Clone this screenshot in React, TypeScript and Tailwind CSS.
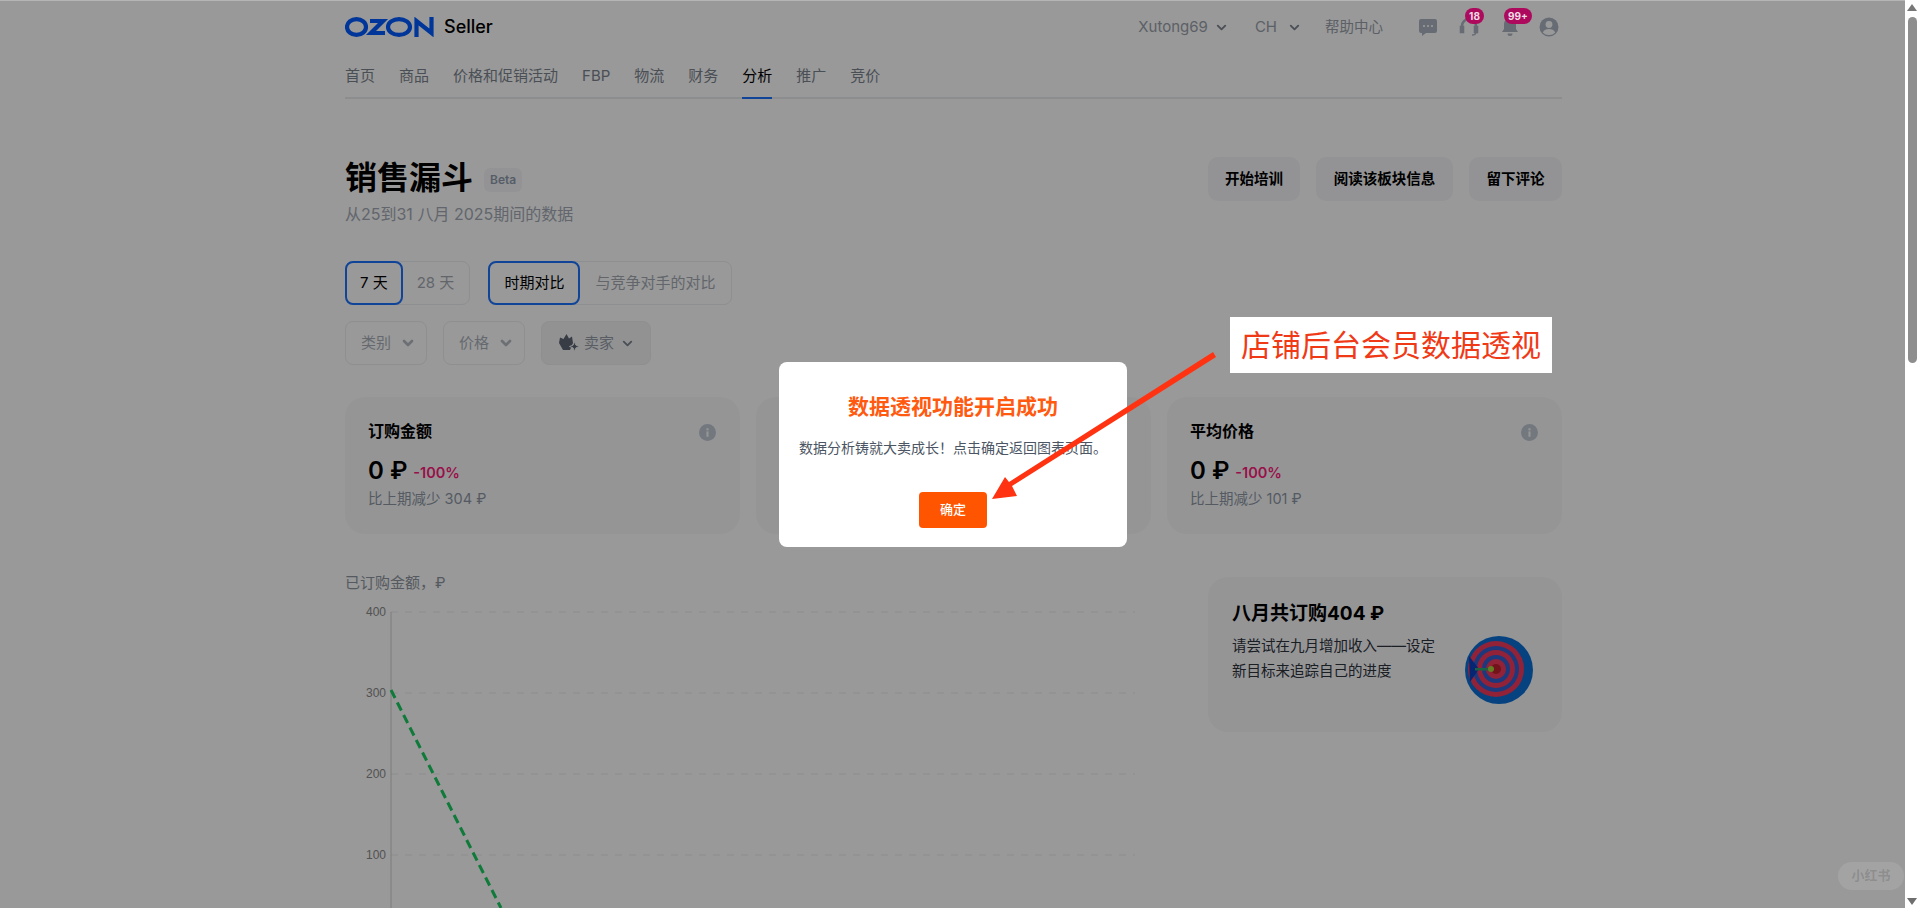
import React from 'react';
import { ChevronDown } from 'lucide-react';

const navItems = ['首页', '商品', '价格和促销活动', 'FBP', '物流', '财务', '分析', '推广', '竞价'];

const font = "font-['Inter','Noto_Sans_CJK_SC','Noto_Sans',sans-serif]";

function OzonLogo() {
  return (
    <div className="flex items-end">
      <svg viewBox="0 0 90 20" className="mb-[1px] h-[20px] w-[90px] fill-none stroke-[#005bff] stroke-[4.2]">
        <ellipse cx="11.5" cy="10" rx="9.5" ry="7.9" />
        <path d="M25 4h13L26 16h14" />
        <ellipse cx="54" cy="10" rx="11" ry="7.9" />
        <path d="M71.5 20V4l15 12V0" />
      </svg>
      <span className="ml-[9px] text-[18px] leading-[22px] font-medium text-black">Seller</span>
    </div>
  );
}

function Badge({ text, className }: { text: string; className: string }) {
  return (
    <span className={`absolute z-10 flex h-[16px] items-center justify-center rounded-full bg-[#ad0a5e] text-[10px] font-bold text-[#eedbe5] ${className}`}>
      {text}
    </span>
  );
}

function Header() {
  return (
    <div className="flex h-[54px] items-center justify-between">
      <OzonLogo />
      <div className="mr-[3px] flex items-center text-[15px] text-[#9aa1ab]">
        <span>Xutong69</span>
        <ChevronDown size={15} strokeWidth={3} className="ml-[6px] text-[#7d8591]" />
        <span className="ml-[26px]">CH</span>
        <ChevronDown size={15} strokeWidth={3} className="ml-[10px] text-[#7d8591]" />
        <span className="ml-[23px] text-[14.5px]">帮助中心</span>
        <svg viewBox="0 0 20 20" className="ml-[35px] h-[20px] w-[20px] fill-[#acb5c2]">
          <path d="M3 2h14a2 2 0 0 1 2 2v10a2 2 0 0 1-2 2H8l-4 3v-3H3a2 2 0 0 1-2-2V4a2 2 0 0 1 2-2Z" />
          <circle cx="6" cy="9" r="1.1" fill="#fff" />
          <circle cx="10" cy="9" r="1.1" fill="#fff" />
          <circle cx="14" cy="9" r="1.1" fill="#fff" />
        </svg>
        <div className="relative ml-[21px] h-[20px] w-[20px]">
          <svg viewBox="0 0 20 20" className="h-[20px] w-[20px] fill-none stroke-[#acb5c2] stroke-[2.6]">
            <path d="M3 11V9a7 7 0 0 1 14 0v2" />
            <path d="M2 10h2v5H2zM16 10h2v5h-2z" fill="#acb5c2" />
            <path d="M17 15c0 2-2 3-4 3" strokeWidth="1.4" />
          </svg>
          <Badge text="18" className="top-[-9px] left-[6px] w-[19px]" />
        </div>
        <div className="relative ml-[21px] h-[20px] w-[20px]">
          <svg viewBox="0 0 20 20" className="h-[20px] w-[20px] fill-[#acb5c2]">
            <path d="M10 1a6 6 0 0 0-6 6v5l-2 3h16l-2-3V7a6 6 0 0 0-6-6Z" />
            <path d="M7.5 16.5h5a2.5 2.5 0 0 1-5 0Z" />
          </svg>
          <Badge text="99+" className="top-[-9px] left-[4px] w-[28px]" />
        </div>
        <svg viewBox="0 0 20 20" className="ml-[19px] h-[20px] w-[20px]">
          <circle cx="10" cy="10" r="9.5" fill="#acb5c2" />
          <circle cx="10" cy="7.5" r="3.4" fill="#fff" />
          <path d="M3.8 15.5c1.2-2.6 3.6-3.5 6.2-3.5s5 .9 6.2 3.5A8 8 0 0 1 10 18a8 8 0 0 1-6.2-2.5Z" fill="#fff" />
        </svg>
      </div>
    </div>
  );
}

function Nav() {
  return (
    <div className="mt-[1px] flex h-[44px] gap-[24px] border-b-2 border-[#e9ebee] text-[15px]">
      {navItems.map((item) => (
        <div
          key={item}
          className={`-mb-[2px] flex h-[44px] items-center border-b-2 ${item === '分析' ? 'border-[#1b72ff] text-black' : 'border-transparent text-[#7c8490]'}`}
        >
          {item}
        </div>
      ))}
    </div>
  );
}

function Segment({ items, activeClass, restClass }: { items: string[]; activeClass: string; restClass: string }) {
  return (
    <div className="flex h-[44px] rounded-[8px] border border-[#eceef1]">
      {items.map((item, i) => (
        <div
          key={item}
          className={
            i === 0
              ? `-m-[1px] flex h-[44px] items-center rounded-[8px] border-2 border-[#1b72ff] text-black ${activeClass}`
              : `flex items-center text-[#a4aab3] ${restClass}`
          }
        >
          {item}
        </div>
      ))}
    </div>
  );
}

function Filter({ label }: { label: string }) {
  return (
    <div className="flex h-[44px] w-[82px] items-center rounded-[8px] border border-[#eceef1] pl-[15px] text-[#a9b0ba]">
      {label}
      <ChevronDown size={16} strokeWidth={4} className="ml-[9px] text-[#b4bbc4]" />
    </div>
  );
}

function InfoDot() {
  return (
    <svg viewBox="0 0 16 16" className="absolute top-[27px] right-[24px] h-[17px] w-[17px]">
      <circle cx="8" cy="8" r="8" fill="#c0c8d4" />
      <rect x="7" y="7" width="2" height="5" fill="#f8f9fb" />
      <rect x="7" y="4" width="2" height="2" fill="#f8f9fb" />
    </svg>
  );
}

function MetricCard({ title, sub }: { title: string; sub?: string }) {
  return (
    <div className="relative h-[137px] rounded-[20px] bg-[#f8f9fb] px-[23px] pt-[23px]">
      <div className="text-[16px] leading-[22px] font-bold text-black">{title}</div>
      <InfoDot />
      <div className="mt-[15px] flex items-center">
        <span className="text-[24px] leading-[28px] font-semibold text-black">0 ₽</span>
        <span className="mt-[3px] ml-[6px] text-[14.5px] font-semibold text-[#ff1a7a]">-100%</span>
      </div>
      <div className="mt-[4px] text-[14.5px] leading-[20px] text-[#8e97a3]">{sub}</div>
    </div>
  );
}

function Target() {
  return (
    <svg viewBox="0 0 68 68" className="h-[68px] w-[68px]">
      <circle cx="34" cy="34" r="34" fill="#0b6fd6" />
      <circle cx="31" cy="33" r="28" fill="#f33a5e" />
      <circle cx="31" cy="33" r="23" fill="#2f5fd0" />
      <circle cx="31" cy="33" r="19" fill="#f33a5e" />
      <circle cx="31" cy="33" r="14" fill="#2f5fd0" />
      <circle cx="31" cy="33" r="10" fill="#f33a5e" />
      <circle cx="31" cy="33" r="5" fill="#c0202c" />
      <path d="M4 20l10 13L5 46Z" fill="#0b3fc0" />
      <rect x="10" y="32" width="18" height="2.5" fill="#2fa36b" />
      <circle cx="26" cy="33" r="3" fill="#a8d23a" />
    </svg>
  );
}

function Chart() {
  const rows = [
    { label: '400', y: 12 },
    { label: '300', y: 93 },
    { label: '200', y: 174 },
    { label: '100', y: 255 },
  ];
  return (
    <svg viewBox="0 0 800 308" className="mt-[7px] h-[308px] w-[800px]">
      {rows.map((r) => (
        <g key={r.label}>
          <text x="41" y={r.y + 4} textAnchor="end" fontSize="12" fill="#8a8a8a" fontFamily="Liberation Sans, sans-serif">
            {r.label}
          </text>
          <line x1="46" x2="790" y1={r.y} y2={r.y} stroke="#ececec" strokeWidth="1" strokeDasharray="7 7" />
        </g>
      ))}
      <line x1="46" x2="46" y1="12" y2="308" stroke="#d0d0d0" strokeWidth="1" />
      <line x1="46" y1="90" x2="156" y2="308" stroke="#19cc60" strokeWidth="3" strokeDasharray="9 5" />
    </svg>
  );
}

function Annotation() {
  return (
    <>
      <div className="absolute top-[317px] left-[1230px] flex h-[56px] w-[322px] items-center justify-center bg-white text-[30px] text-[#f03a17]">
        店铺后台会员数据透视
      </div>
      <svg className="absolute top-0 left-0 h-[908px] w-[1919px]" viewBox="0 0 1919 908">
        <polygon points="1213,352 1216,357 1012,486 1017,496 992,499 1005,477 1009,482" fill="#ff3311" />
      </svg>
    </>
  );
}

function Modal() {
  return (
    <div className="absolute top-[362px] left-[779px] flex h-[185px] w-[348px] flex-col items-center rounded-[8px] bg-white">
      <div className="mt-[31px] text-[21px] leading-[28px] font-bold text-[#ff5a10]">数据透视功能开启成功</div>
      <div className="mt-[17px] text-[14px] leading-[20px] text-[#4b5563]">数据分析铸就大卖成长！点击确定返回图表页面。</div>
      <button className="mt-[34px] h-[36px] w-[68px] rounded-[4px] bg-[#ff5500] text-[13px] font-medium text-white">确定</button>
    </div>
  );
}

function Scrollbar() {
  return (
    <div className="flex w-[14px] shrink-0 flex-col items-center justify-between bg-white">
      <div className="flex w-full flex-col items-center">
        <div className="mt-[4px] h-0 w-0 border-x-[5px] border-b-[7px] border-x-transparent border-b-[#777777]" />
        <div className="mt-[6px] h-[346px] w-[9px] rounded-[5px] bg-[#8e8e8e]" />
      </div>
      <div className="mb-[3px] h-0 w-0 border-x-[5px] border-t-[7px] border-x-transparent border-t-[#6e6e6e]" />
    </div>
  );
}

export default function App() {
  return (
    <div className={`relative flex h-[908px] w-[1919px] overflow-hidden bg-white ${font}`}>
      <div className="relative min-w-0 flex-1 overflow-hidden">
        <div className="mx-[345px] w-[1217px]">
          <Header />
          <Nav />

          <div className="mt-[57px] flex items-start justify-between">
            <div>
              <div className="flex items-center">
                <h1 className="text-[32px] leading-[44px] font-bold text-black">销售漏斗</h1>
                <span className="mt-[3px] ml-[11px] flex h-[24px] items-center rounded-[6px] bg-[#f5f6f8] px-[6px] text-[12px] font-semibold text-[#8f9cad]">Beta</span>
              </div>
              <div className="mt-[3px] text-[16px] leading-[22px] text-[#a3aab5]">从25到31 八月 2025期间的数据</div>
            </div>
            <div className="mt-[1px] flex gap-[16px] text-[14.5px] font-bold text-black">
              <button className="h-[44px] w-[92px] rounded-[10px] bg-[#f5f6f8]">开始培训</button>
              <button className="h-[44px] w-[137px] rounded-[10px] bg-[#f5f6f8]">阅读该板块信息</button>
              <button className="h-[44px] w-[93px] rounded-[10px] bg-[#f5f6f8]">留下评论</button>
            </div>
          </div>

          <div className="mt-[36px] flex gap-[18px] text-[15px]">
            <Segment items={['7 天', '28 天']} activeClass="px-[13px]" restClass="px-[15px]" />
            <Segment items={['时期对比', '与竞争对手的对比']} activeClass="px-[14px]" restClass="px-[16px]" />
          </div>

          <div className="mt-[16px] flex gap-[16px] text-[15px]">
            <Filter label="类别" />
            <Filter label="价格" />
            <div className="flex h-[44px] w-[110px] items-center rounded-[8px] border border-[#eceef1] bg-[#f3f4f6] pl-[16px] text-[#959ca7]">
              <svg viewBox="0 0 22 20" className="h-[20px] w-[22px] fill-[#5e6673]">
                <path d="M8.5 1l2.5 4.5L14 3.5l1 6.5-3 7H5L1 10l1-5.5 3.5 1.5Z" />
                <path d="M16.5 8.5l1.4 3.6 3.6 1.4-3.6 1.4-1.4 3.6-1.4-3.6-3.6-1.4 3.6-1.4Z" stroke="#f3f4f6" />
              </svg>
              <span className="ml-[4px]">卖家</span>
              <ChevronDown size={15} strokeWidth={3} className="ml-[6px] text-[#7d8591]" />
            </div>
          </div>

          <div className="mt-[32px] grid grid-cols-3 gap-[16px]">
            <MetricCard title="订购金额" sub="比上期减少 304 ₽" />
            <MetricCard title="订单数量" sub="比上期减少 3" />
            <MetricCard title="平均价格" sub="比上期减少 101 ₽" />
          </div>

          <div className="flex">
            <div className="mt-[39px] w-[863px] shrink-0">
              <div className="text-[15px] leading-[20px] text-[#8e95a0]">已订购金额，₽</div>
              <Chart />
            </div>
            <div className="mt-[43px] flex h-[155px] w-[355px] justify-between rounded-[20px] bg-[#f8f9fb] pt-[24px] pr-[29px] pl-[24px]">
              <div>
                <div className="text-[19px] leading-[26px] font-bold text-black">八月共订购404 ₽</div>
                <div className="mt-[7px] w-[210px] text-[14.5px] leading-[24.5px] text-[#2e333b]">请尝试在九月增加收入——设定新目标来追踪自己的进度</div>
              </div>
              <div className="mt-[35px]">
                <Target />
              </div>
            </div>
          </div>
        </div>

        <div className="absolute inset-0 bg-black/40" />
        <div className="absolute top-0 right-0 left-0 h-[1px] bg-[#b5b5b5]" />
        <div className="absolute right-[1px] bottom-[18px] flex h-[28px] w-[66px] items-center justify-center rounded-full bg-white/10 text-[13px] font-bold text-black/15">小红书</div>
        <Modal />
      </div>
      <Scrollbar />
      <div className="pointer-events-none absolute inset-0">
        <Annotation />
      </div>
    </div>
  );
}
